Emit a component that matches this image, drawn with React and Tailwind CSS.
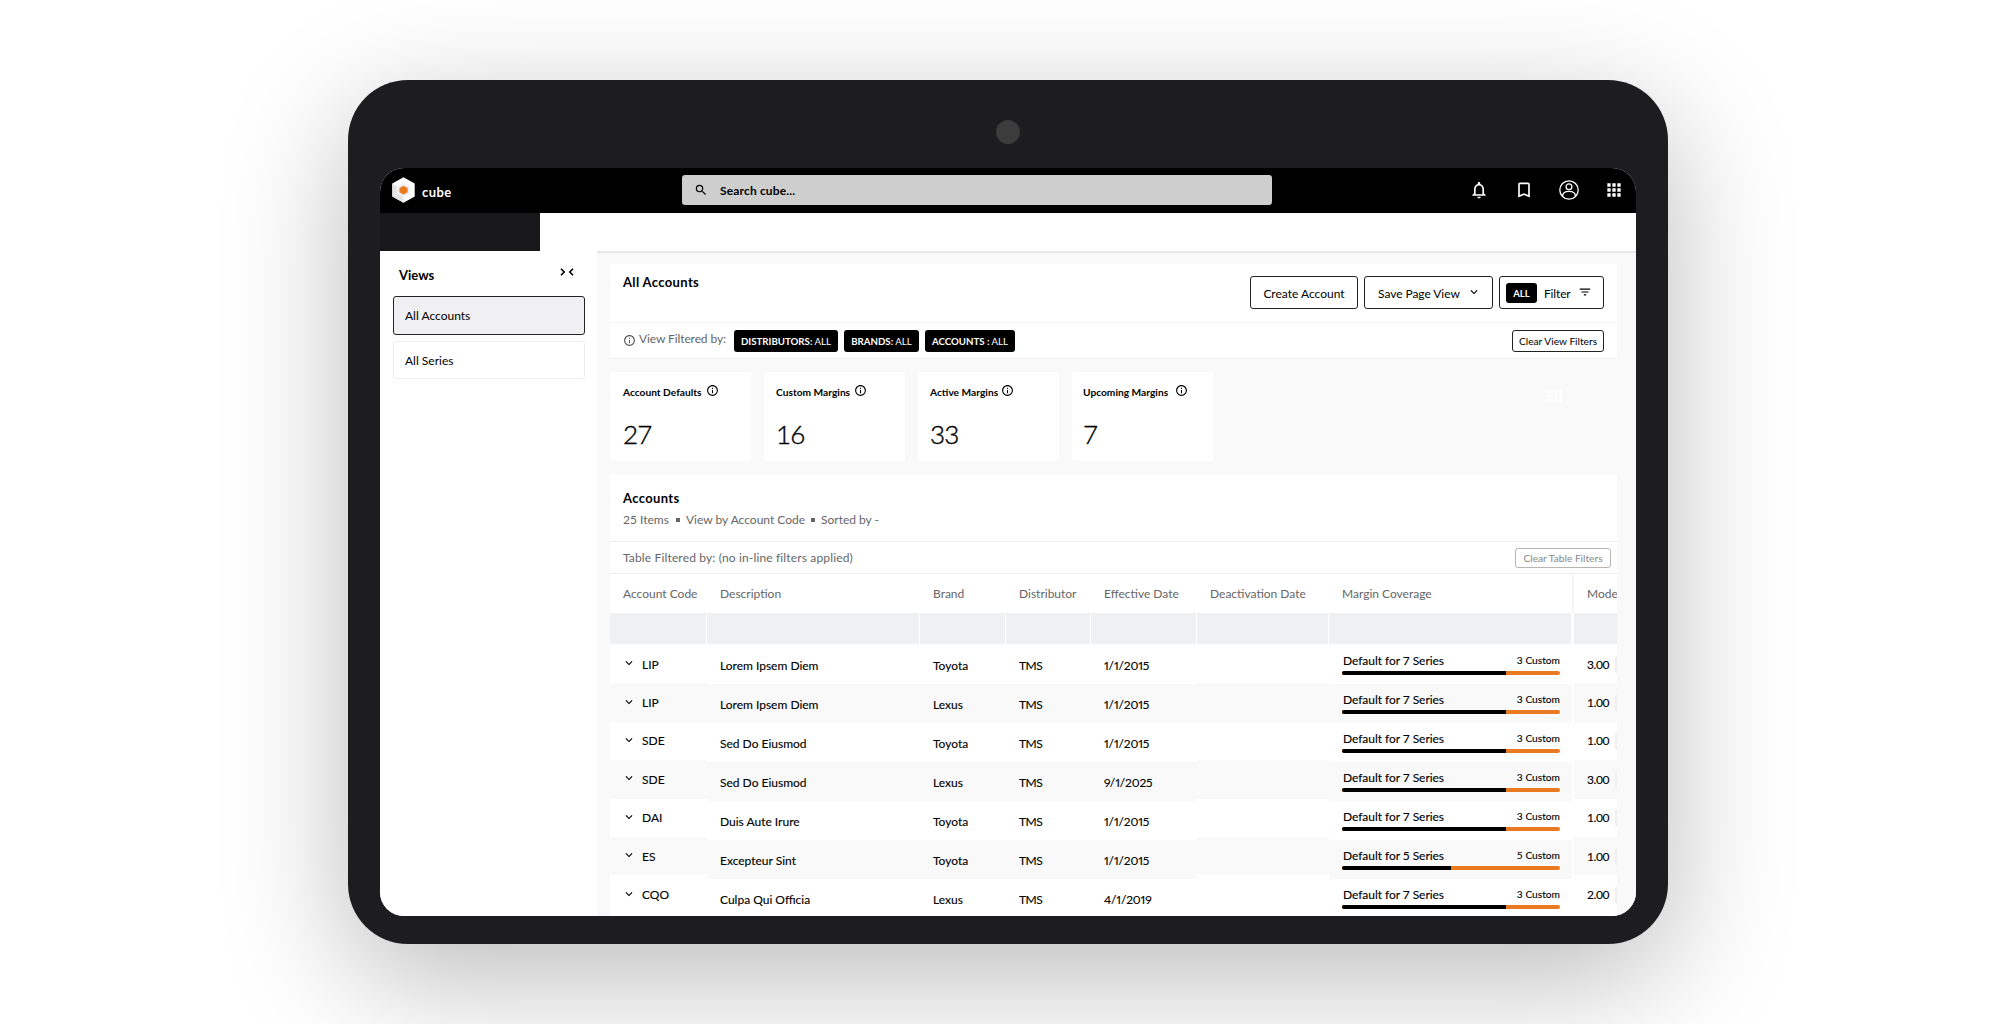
import {
  MdApps,
  MdBookmarkBorder,
  MdFilterList,
  MdInfoOutline,
  MdKeyboardArrowDown,
  MdNotificationsNone,
  MdSearch,
} from "react-icons/md";

const stats = [
  { label: "Account Defaults", value: "27", pad: "pl-[13px]", gap: "gap-1" },
  { label: "Custom Margins", value: "16", pad: "pl-3", gap: "gap-1" },
  { label: "Active Margins", value: "33", pad: "pl-3", gap: "gap-[3px]" },
  { label: "Upcoming Margins", value: "7", pad: "pl-[11px]", gap: "gap-[7px]" },
];

const filters = [
  { label: "DISTRIBUTORS:", width: "w-[104px]" },
  { label: "BRANDS:", width: "w-[75px]" },
  { label: "ACCOUNTS :", width: "w-[90px]" },
];

const accounts = [
  { code: "LIP", description: "Lorem Ipsem Diem", brand: "Toyota", date: "1/1/2015", series: 7, custom: 3, mode: "3.00" },
  { code: "LIP", description: "Lorem Ipsem Diem", brand: "Lexus", date: "1/1/2015", series: 7, custom: 3, mode: "1.00" },
  { code: "SDE", description: "Sed Do Eiusmod", brand: "Toyota", date: "1/1/2015", series: 7, custom: 3, mode: "1.00" },
  { code: "SDE", description: "Sed Do Eiusmod", brand: "Lexus", date: "9/1/2025", series: 7, custom: 3, mode: "3.00" },
  { code: "DAI", description: "Duis Aute Irure", brand: "Toyota", date: "1/1/2015", series: 7, custom: 3, mode: "1.00" },
  { code: "ES", description: "Excepteur Sint", brand: "Toyota", date: "1/1/2015", series: 5, custom: 5, mode: "1.00" },
  { code: "CQO", description: "Culpa Qui Officia", brand: "Lexus", date: "4/1/2019", series: 7, custom: 3, mode: "2.00" },
];

const Logo = () => (
  <svg viewBox="0 0 23 26" className="h-[26px] w-[23px]">
    <path d="M11.5 0.3 22.7 6.5v13L11.5 25.7 0.3 19.5v-13z" fill="#fff" />
    <path d="M11.5 5.5 18 9.2v7.6l-6.5 3.7L5 16.8V9.2z" fill="#f1f1f3" />
    <path d="M0.3 6.8 5 9.2v7.6l6.5 3.7v5.2L0.3 19.5z" fill="#e4e4e6" />
    <path d="M11.5 8.7 15.6 11v4.3l-4.1 2.3-4.1-2.3V11z" fill="#ea7a1f" />
  </svg>
);

const UserIcon = () => (
  <svg viewBox="0 0 20 20" className="h-5 w-5" fill="none" stroke="#fff" strokeWidth="1.3">
    <circle cx="10" cy="10" r="9.2" />
    <circle cx="10" cy="6.7" r="2.9" />
    <path d="M3.6 16.2c0-3 2.6-4.9 6.4-4.9s6.4 1.9 6.4 4.9" />
  </svg>
);

const TopBar = () => (
  <header className="flex h-[45px] items-center bg-black pb-px text-white">
    <div className="flex w-[302px] items-center pl-3">
      <Logo />
      <span className="pl-[7px] pt-[5px] text-[13px] font-bold tracking-[0.4px]">cube</span>
    </div>
    <div className="flex h-[30px] w-[590px] items-center rounded-[3px] bg-[#cecece] pl-3 text-black">
      <MdSearch className="h-3.5 w-3.5" />
      <span className="pl-3 pt-0.5 text-xs font-bold tracking-[0.15px]">Search cube...</span>
    </div>
    <div className="ml-auto flex items-center gap-[25px] pb-px pr-3">
      <MdNotificationsNone className="h-5 w-5" />
      <MdBookmarkBorder className="h-5 w-5" />
      <UserIcon />
      <MdApps className="h-5 w-5" />
    </div>
  </header>
);

const Sidebar = () => (
  <aside className="w-[217px] shrink-0 bg-white pl-[13px] pr-3">
    <div className="flex h-[45px] justify-between pl-1.5 pr-[11px]">
      <h2 className="pt-[15px] text-[13px] font-bold leading-[18px]">Views</h2>
      <svg viewBox="0 0 14 8" className="mt-[17px] h-2 w-3.5" fill="none" stroke="#000" strokeWidth="1.6">
        <path d="M1 0.8 4.2 4 1 7.2M13 0.8 9.8 4 13 7.2" />
      </svg>
    </div>
    <div className="flex h-[39px] items-center rounded-[3px] border border-[#222] bg-[#f0f0f2] pl-[11px] pt-px text-xs">
      All Accounts
    </div>
    <div className="mt-1.5 flex h-[38px] items-center rounded-[3px] border border-[#ececec] pl-[11px] pt-px text-xs">
      All Series
    </div>
  </aside>
);

const PageHeader = () => (
  <section className="h-[95px] rounded-[3px] border-b border-[#eeeeee] bg-white">
    <div className="flex h-[59px] justify-between border-b border-[#f5f5f5] pl-[13px] pr-[13px]">
      <h1 className="pt-[9px] text-[13px] font-bold leading-[18px] tracking-[0.35px]">All Accounts</h1>
      <div className="flex gap-1.5 pt-3 text-xs">
        <button className="flex h-[33px] w-[108px] items-center justify-center rounded-[3px] border border-[#222] pt-[3px]">
          Create Account
        </button>
        <button className="flex h-[33px] w-[129px] items-center rounded-[3px] border border-[#222] pl-[13px]">
          <span className="pt-[3px] tracking-[-0.05px]">Save Page View</span>
          <MdKeyboardArrowDown className="mb-px ml-[7px] h-3.5 w-3.5" />
        </button>
        <button className="flex h-[33px] w-[105px] items-center rounded-[3px] border border-[#222] pl-1.5">
          <span className="flex h-5 w-[31px] items-center justify-center rounded-[3px] bg-black pt-[3px] text-[9.5px] font-bold text-white">
            ALL
          </span>
          <span className="pl-[7px] pt-[3px] tracking-[-0.15px]">Filter</span>
          <MdFilterList className="mb-px ml-[7px] h-3.5 w-3.5" />
        </button>
      </div>
    </div>
    <div className="flex h-[35px] items-center pl-[13px] pr-[13px]">
      <MdInfoOutline className="mb-px h-[13px] w-[13px] text-[#555]" />
      <span className="w-[98px] pb-[3px] pl-[3px] text-xs tracking-[-0.1px] text-[#666]">View Filtered by:</span>
      <div className="flex gap-1.5">
        {filters.map((f) => (
          <span
            key={f.label}
            className={`flex h-[22px] items-center justify-center whitespace-pre rounded-[3px] bg-black pt-0.5 text-[9.7px] text-white ${f.width}`}
          >
            <b>{f.label}</b> ALL
          </span>
        ))}
      </div>
      <button className="ml-auto flex h-[22px] w-[92px] items-center justify-center rounded-[3px] border border-[#222] pt-0.5 text-[10.2px]">
        Clear View Filters
      </button>
    </div>
  </section>
);

const Stats = () => (
  <section className="mt-[13px] flex gap-[13px]">
    {stats.map((s) => (
      <div key={s.label} className={`h-[89px] w-[141px] rounded-[3px] bg-white ${s.pad}`}>
        <div className={`flex pt-3 ${s.gap}`}>
          <span className="whitespace-nowrap pt-px text-[10.2px] font-bold leading-[14px]">{s.label}</span>
          <MdInfoOutline className="h-[13px] w-[13px]" />
        </div>
        <div className="pt-[19px] text-[26px] font-light leading-8 tracking-[-0.8px] [-webkit-text-stroke:0.4px]">
          {s.value}
        </div>
      </div>
    ))}
    {/* White on near-white, only faintly visible */}
    <svg viewBox="0 0 16 12" className="ml-[320px] mt-[18px] h-3 w-4" fill="none" stroke="#fff" strokeWidth="2.4">
      <path d="M0 1.5h7M0 6h7M0 10.5h7M10 1.5h4.5v9H10z" />
    </svg>
  </section>
);

const Column = ({ title, width, short, children }) => (
  <div className={`shrink-0 ${width}`}>
    <div className="flex h-[39px] items-center whitespace-nowrap bg-white pl-[13px] pt-px text-[#666]">{title}</div>
    <div className="mb-px h-[31px] border-r border-white bg-[#eff0f2]" />
    {accounts.map((row, i) => (
      <div
        key={i}
        className={`flex items-center whitespace-nowrap pl-[13px] [-webkit-text-stroke:0.12px] ${
          short ? "h-[38.4px] pt-px" : "h-[39px] pt-0.5"
        } ${i % 2 ? "bg-[#f9f9f9]" : "bg-white"}`}
      >
        {children?.(row)}
      </div>
    ))}
  </div>
);

const Coverage = ({ row }) => (
  <div className="w-[218px] pb-1">
    <div className="flex h-[17px] items-center justify-between">
      <span className="pl-px tracking-[-0.05px]">
        Default for {row.series} Series
      </span>
      <span className="text-[10.2px]">{row.custom} Custom</span>
    </div>
    <div className="mt-0.5 flex h-[3.5px] overflow-hidden rounded-full bg-[#ea7a1f]">
      <div className={`bg-black ${row.custom === 5 ? "w-1/2" : "w-3/4"}`} />
    </div>
  </div>
);

const AccountsTable = () => (
  <section className="mt-[13px] rounded-t-[3px] bg-white text-xs">
    <div className="h-[68px] border-b border-[#eeeeee] pl-[13px] pt-[15px]">
      <h2 className="text-[13px] font-bold leading-[18px] tracking-[0.35px]">Accounts</h2>
      <div className="flex items-center whitespace-nowrap pt-1 leading-[18px] text-[#666]">
        <span className="w-[53px]">25 Items</span>
        <i className="h-1 w-1 bg-[#666]" />
        <span className="w-[131px] pl-1.5">View by Account Code</span>
        <i className="h-1 w-1 bg-[#666]" />
        <span className="pl-1.5">Sorted by -</span>
      </div>
    </div>
    <div className="flex h-8 items-center justify-between border-b border-[#eeeeee] pl-[13px] pr-1.5">
      <span className="tracking-[0.15px] text-[#666]">Table Filtered by: (no in-line filters applied)</span>
      <button className="flex h-5 w-[96px] items-center justify-center rounded-[3px] border border-[#b8b5b5] pt-0.5 text-[10.2px] text-[#888]">
        Clear Table Filters
      </button>
    </div>
    <div className="flex overflow-hidden">
      <Column title="Account Code" width="w-[97px]" short>
        {(row) => (
          <>
            <MdKeyboardArrowDown className="-ml-px mb-[3px] h-3.5 w-3.5" />
            <span className="pl-1.5">{row.code}</span>
          </>
        )}
      </Column>
      <Column title="Description" width="w-[213px]">
        {(row) => row.description}
      </Column>
      <Column title="Brand" width="w-[86px]">
        {(row) => row.brand}
      </Column>
      <Column title="Distributor" width="w-[85px]">
        {() => <span className="tracking-[-0.5px]">TMS</span>}
      </Column>
      <Column title="Effective Date" width="w-[106px]">
        {(row) => <span className="proportional-nums tracking-[-0.15px]">{row.date}</span>}
      </Column>
      <Column title="Deactivation Date" width="w-[132px]" short />
      <Column title="Margin Coverage" width="w-[243px]">
        {(row) => <Coverage row={row} />}
      </Column>
      <div className="w-0.5 shrink-0">
        <div className="h-[39px] bg-[#f5f5f5]" />
      </div>
      <Column title="Mode" width="w-[60px]" short>
        {(row) => (
          <>
            <span className="w-7 shrink-0 tracking-[-0.4px]">{row.mode}</span>
            <i className="h-[18px] w-6 shrink-0 rounded-[3px] bg-[#f0f0f0]" />
          </>
        )}
      </Column>
    </div>
  </section>
);

const App = () => {
  return (
    <div className="flex h-screen justify-center overflow-hidden bg-white pt-20 font-['Lato','Open_Sans',sans-serif] text-black">
      <div className="flex h-[864px] w-[1320px] flex-col items-center rounded-[60px] bg-[#1d1d1f] shadow-[0_34px_125px_rgba(0,0,0,0.27)]">
        <div className="mt-10 h-6 w-6 shrink-0 rounded-full bg-[#3c3c3d]" />
        <div className="mt-6 h-[748px] w-[1256px] shrink-0 overflow-hidden rounded-3xl bg-white">
          <TopBar />
          <div className="flex h-[38px]">
            <div className="w-40 bg-[#18181a]" />
          </div>
          <div className="flex h-[665px]">
            <Sidebar />
            <main className="min-w-0 flex-1 border-t-2 border-[#e6e7e9] bg-[#f9f9f9] pl-[13px] pr-[19px] pt-[11px]">
              <PageHeader />
              <Stats />
              <AccountsTable />
            </main>
          </div>
        </div>
      </div>
    </div>
  );
};

export default App;
